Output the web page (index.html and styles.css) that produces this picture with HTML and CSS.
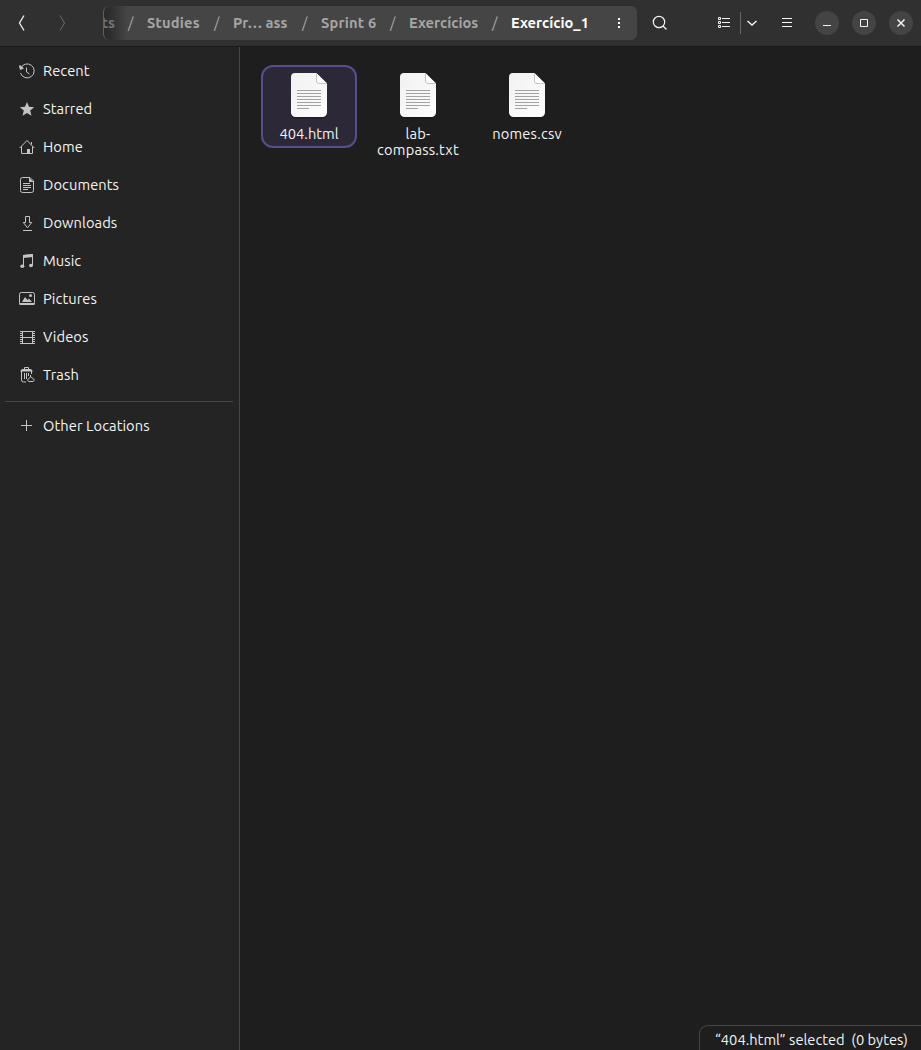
FILE: index.html
```html
<!DOCTYPE html>
<html lang="en">
<head>
<meta charset="utf-8">
<title>Files</title>
<link rel="stylesheet" href="styles.css">
</head>
<body>
<svg class="defs" width="0" height="0">
  <defs>
    <linearGradient id="paper" x1="0" y1="0" x2="1" y2="1"><stop offset="0" stop-color="#f1f1f1"/><stop offset="1" stop-color="#fdfdfd"/></linearGradient>
    <symbol id="file" viewBox="0 0 40 48">
      <path d="M6 2.3H27L38 12V42a4.500 4.500 0 0 1-4.500 4.500H6.500A4.500 4.500 0 0 1 2 42V6.300a4 4 0 0 1 4-4z" fill="#111" opacity=".5"/>
      <path d="M6 1H27L38 11.500V40.500a4.500 4.500 0 0 1-4.500 4.500H6.500A4.500 4.500 0 0 1 2 40.500V5a4 4 0 0 1 4-4z" fill="url(#paper)"/>
      <path d="M27.500 1L38 11.500H30a2.500 2.500 0 0 1-2.500-2.500z" fill="#fff"/>
      <path d="M27.500 1V9a2.500 2.500 0 0 0 2.500 2.500h8" fill="none" stroke="#c4c4c4"/>
      <path d="M8 18.500H32M8 21.500H32M8 24.500H32M8 27.500H32M8 30.500H32M8 33.500H32M8 36.500H20" stroke="#a2a2a2"/>
    </symbol>
  </defs>
</svg>
<div class="window">
  <header class="bar">
    <svg class="back" width="16" height="18" viewBox="0 0 16 18"><path d="M11 1.500L6.500 9l4.500 7.500"/></svg>
    <svg class="forward" width="16" height="18" viewBox="0 0 16 18"><path d="M5 1.500L9.500 9l-4.500 7.500"/></svg>
    <nav class="path">
      <span class="crumb w-cut">ts</span><i class="sep">/</i>
      <span class="crumb w-studies">Studies</span><i class="sep">/</i>
      <span class="crumb w-pr">Pr… ass</span><i class="sep">/</i>
      <span class="crumb w-sprint">Sprint 6</span><i class="sep">/</i>
      <span class="crumb w-ex">Exercícios</span><i class="sep">/</i>
      <span class="crumb w-current">Exercício_1</span>
      <svg class="dots" width="4" height="12" viewBox="0 0 4 12"><path d="M1 1h2v2H1zM1 5h2v2H1zM1 9h2v2H1z" fill="#fff"/></svg>
    </nav>
    <svg class="search" width="16" height="16" viewBox="0 0 16 16"><circle cx="7" cy="7" r="5.700"/><path d="M11 11l3.500 3.500"/></svg>
    <svg class="list" width="14" height="12" viewBox="0 0 14 12"><path d="M1.500 1h2v2h-2zM1.500 5h2v2h-2zM1.500 9h2v2h-2zM5 2h8M5 6h8M5 10h8" transform="translate(0 -.5)"/></svg>
    <span class="rule"></span>
    <svg class="chevron" width="12" height="8" viewBox="0 0 12 8"><path d="M1.500 2L6 6l4.500-4"/></svg>
    <svg class="menu" width="12" height="10" viewBox="0 0 12 10"><path d="M1 .5h10M1 4.500h10M1 8.500h10"/></svg>
    <span class="round"><svg width="10" height="10" viewBox="0 0 10 10"><path d="M1 7.500h8"/></svg></span>
    <span class="round"><svg width="10" height="10" viewBox="0 0 10 10"><path d="M1.500 1.500h7v7h-7z"/></svg></span>
    <span class="round"><svg width="10" height="10" viewBox="0 0 10 10"><path d="M1.500 1.500l7 7M8.500 1.500l-7 7" stroke-width="1.500"/></svg></span>
  </header>
  <div class="body">
    <aside class="sidebar">
      <div class="place"><svg viewBox="0 0 16 16"><path d="M1.600 5.500A7 7 0 1 1 1.500 10M7.500 4.500V9l3 2"/><path class="solid" d="M0 3l1-1 4 3.500-4 1.500z"/></svg><span>Recent</span></div>
      <div class="place"><svg viewBox="0 0 16 16"><path class="solid" d="M8 1l2 4.800 5.200.4-4 3.400 1.300 5.100L8 12l-4.500 2.700 1.300-5.100-4-3.400L6 5.800z"/></svg><span>Starred</span></div>
      <div class="place"><svg viewBox="0 0 16 16"><path d="M.7 9L8 1.500 15.300 9M2.500 7.500v7h11v-7M12.500 5.500v-2.500"/><path class="solid" d="M8 10h3v5H8z"/></svg><span>Home</span></div>
      <div class="place"><svg viewBox="0 0 16 16"><path d="M3.500.5H11l3.500 3.500v9.500a2 2 0 0 1-2 2h-9a2 2 0 0 1-2-2v-11a2 2 0 0 1 2-2zM4 6.500h7M4 8.500h8M4 10.500h8M4 12.500h5"/><path class="solid" d="M10 .5l4.500 4.500H10z"/></svg><span>Documents</span></div>
      <div class="place"><svg viewBox="0 0 16 16"><path d="M6.500 1.500h4v6h2.200L8.500 12.800 4.300 7.500h2.200zM4 15.500h9"/></svg><span>Downloads</span></div>
      <div class="place"><svg viewBox="0 0 16 16"><path d="M4.500 13V2.500l9-1V12"/><path class="solid" d="M4 2l10-1v3L4 5z"/><ellipse class="solid" cx="3.300" cy="13.300" rx="2" ry="1.700"/><ellipse class="solid" cx="12" cy="12.500" rx="2" ry="1.700"/></svg><span>Music</span></div>
      <div class="place"><svg viewBox="0 0 16 16"><rect x=".5" y="1.500" width="15" height="12" rx="1.800"/><path class="solid" d="M.5 12h15v2H.5zM3 11l3-5 2.500 3L10 7.500l3 3.500z"/><circle class="solid" cx="11.500" cy="4.500" r="1.500"/></svg><span>Pictures</span></div>
      <div class="place"><svg viewBox="0 0 16 16"><path d="M3.500 2.500h10v12h-10zM3.500 8.500h10"/><path d="M1.500 2v13M15.500 2v13" stroke-dasharray="1 1"/><path d="M1 2.500h3M1 14.500h3M13 2.500h3M13 14.500h3"/><path d="M2.500 4v10M14.500 4v10" stroke-dasharray="1 1"/></svg><span>Videos</span></div>
      <div class="place"><svg viewBox="0 0 16 16"><path d="M5.500 2.500v-2h4v2M2.500 4v9a2 2 0 0 0 2 2H7M12.500 4v3M5.500 6v6M7.500 6v6M9.500 6v3"/><path class="solid" d="M1 4.500L3 2h9l2 2.500z"/><path d="M11.500 8v2M9.500 14.500a1.700 1.700 0 0 1 .3-3l2-1.700 2.200 1.700a1.700 1.700 0 0 1 .3 3z"/></svg><span>Trash</span></div>
      <hr class="divider">
      <div class="place"><svg viewBox="0 0 16 16"><path d="M2 7.500h11M7.500 2v11"/></svg><span>Other Locations</span></div>
    </aside>
    <main class="files">
      <div class="file selected"><svg width="40" height="48"><use href="#file"/></svg><span>404.html</span></div>
      <div class="file"><svg width="40" height="48"><use href="#file"/></svg><span>lab-<br>compass.txt</span></div>
      <div class="file"><svg width="40" height="48"><use href="#file"/></svg><span>nomes.csv</span></div>
      <footer class="status">“404.html” selected&nbsp; (0 bytes)</footer>
    </main>
  </div>
</div>
</body>
</html>
```

FILE: styles.css
```css
* { box-sizing: border-box; }
body { margin: 0; background: #1e1e1e; color: #f4f4f4; font: 14.667px/16px "Ubuntu", "Noto Sans", sans-serif; }
svg { display: block; flex: none; fill: none; stroke: #f4f4f4; }
.defs { position: absolute; }
.window { width: 921px; height: 1050px; display: flex; flex-direction: column; overflow: hidden; }
.bar { height: 47px; flex: none; display: flex; align-items: center; padding: 0 8px 1px 13px; background: #303030; border-bottom: 1px solid #191919; }
.back { stroke-width: 1.3; }
.forward { margin-left: 26px; stroke: #6d6d6d; }
.path { width: 534px; height: 34px; margin-left: 32px; display: flex; align-items: center; overflow: hidden; border-radius: 6px; border-left: 1px solid #606060; background: linear-gradient(90deg, #292929 0, #2e2e2e 6px, #454545 23px); font-weight: 700; white-space: nowrap; }
.crumb { flex: none; color: #a5a5a5; }
.sep { flex: none; width: 6px; margin: 0 13px; font-style: normal; font-weight: 400; color: #a5a5a5; }
.w-cut { width: 11px; color: #747474; display: flex; justify-content: flex-end; }
.w-studies { width: 54px; letter-spacing: .2px; }
.w-pr { width: 56px; }
.w-sprint { width: 56px; letter-spacing: .2px; }
.w-ex { width: 70px; }
.w-current { width: 77px; color: #fff; }
.dots { margin-left: 29px; stroke: none; }
.search { margin-left: 15px; stroke-width: 1.2; }
.list { margin-left: 49px; }
.rule { width: 1px; height: 22px; margin-left: 9px; background: #686868; }
.chevron { margin-left: 5px; stroke-width: 1.4; }
.menu { margin-left: 23px; }
.round { width: 24px; height: 24px; margin-left: 13px; border-radius: 50%; background: #444; display: flex; align-items: center; justify-content: center; }
.menu + .round { margin-left: 22px; }
.body { flex: 1; display: flex; min-height: 0; }
.sidebar { width: 240px; padding-top: 5px; background: #242424; border-right: 1px solid #464646; }
.place { height: 38px; padding-left: 19px; display: flex; align-items: center; gap: 8px; letter-spacing: .08px; }
.place svg { width: 16px; height: 16px; stroke: #c4c4c4; }
.place .solid { fill: #c4c4c4; stroke: none; }
.divider { height: 1px; margin: 7px 6px 5px 5px; border: 0; background: #464646; }
.files { position: relative; flex: 1; padding: 18px 0 0 21px; display: flex; align-items: flex-start; gap: 13px; }
.file { width: 96px; height: 83px; padding-top: 7px; display: flex; flex-direction: column; align-items: center; border-radius: 12px; text-align: center; white-space: nowrap; letter-spacing: .2px; }
.file svg { stroke: none; }
.file span { margin-top: 6px; }
.selected { padding-top: 5px; border: 2px solid #594e8c; background: #2c2838; letter-spacing: 0; }
.status { position: absolute; right: 0; bottom: 0; width: 222px; height: 25px; padding: 6px 0 0 15px; border: 1px solid #464646; border-width: 1px 0 0 1px; border-radius: 9px 0 0 0; white-space: nowrap; }
```
